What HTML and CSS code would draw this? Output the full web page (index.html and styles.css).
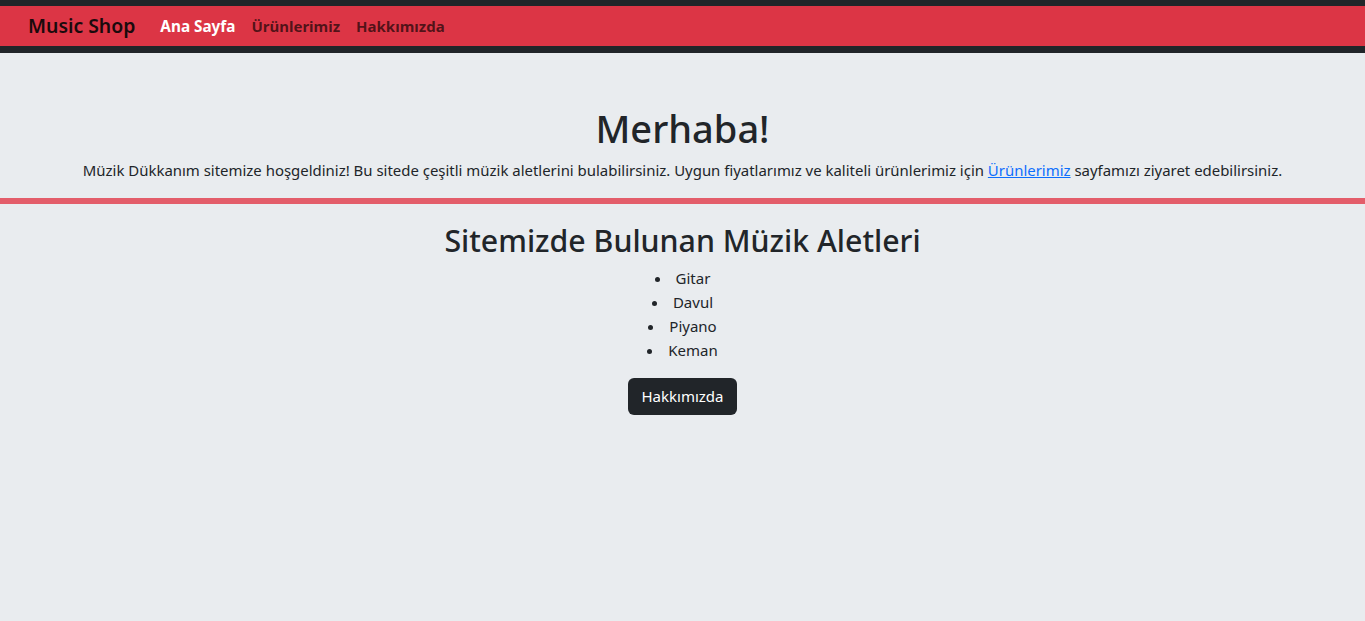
FILE: index.html
```html
<!DOCTYPE html>
<html lang="tr">
<head>
<meta charset="utf-8">
<title>Music Shop</title>
<link rel="stylesheet" href="styles.css">
</head>
<body>
<nav class="navbar">
  <a class="brand" href="#">Music Shop</a>
  <ul class="nav-links">
    <li><a class="nav-link active" href="#">Ana Sayfa</a></li>
    <li><a class="nav-link" href="#">Ürünlerimiz</a></li>
    <li><a class="nav-link" href="#">Hakkımızda</a></li>
  </ul>
</nav>
<header class="hero">
  <h1 class="hero-title">Merhaba!</h1>
  <p class="hero-text">Müzik Dükkanım sitemize hoşgeldiniz! Bu sitede çeşitli müzik aletlerini bulabilirsiniz. Uygun fiyatlarımız ve kaliteli ürünlerimiz için <a class="link" href="#">Ürünlerimiz</a> sayfamızı ziyaret edebilirsiniz.</p>
</header>
<main class="content">
  <h2 class="section-title">Sitemizde Bulunan Müzik Aletleri</h2>
  <ul class="instruments">
    <li>Gitar</li>
    <li>Davul</li>
    <li>Piyano</li>
    <li>Keman</li>
  </ul>
  <a class="btn-dark" href="#">Hakkımızda</a>
</main>
</body>
</html>
```
FILE: styles.css
```css
* { box-sizing: border-box; }
html, body { margin: 0; padding: 0; }
body {
  background: #e9ecef;
  color: #212529;
  font-family: "Noto Sans", "Open Sans", sans-serif;
  font-size: 15px;
  line-height: 24px;
}
.navbar {
  display: flex;
  align-items: center;
  background: #dc3545;
  border-top: 6px solid #212529;
  border-bottom: 7px solid #212529;
  height: 53px;
  padding: 0 28px;
}
.brand {
  color: #1a0a0c;
  text-decoration: none;
  font-size: 19.4px;
  font-weight: 600;
  margin-right: 25px;
}
.nav-links {
  display: flex;
  list-style: none;
  margin: 0;
  padding: 0;
  gap: 16px;
}
.nav-link {
  text-decoration: none;
  font-weight: 700;
  font-size: 15px;
  color: rgba(0, 0, 0, 0.65);
}
.nav-link.active {
  color: #fff;
  font-size: 15.3px;
}
.hero {
  text-align: center;
  padding-top: 51px;
  border-bottom: 6px solid #e35d6a;
}
.hero-title {
  margin: 0 0 6px;
  font-size: 38px;
  line-height: 48px;
  font-weight: 500;
}
.hero-text {
  margin: 0 0 16px;
  font-size: 14.94px;
}
.link { color: #0d6efd; }
.content {
  text-align: center;
  padding-top: 18px;
}
.section-title {
  margin: 0 0 6px;
  font-size: 30.3px;
  line-height: 38px;
  font-weight: 500;
}
.instruments {
  list-style-position: inside;
  margin: 0 0 16px;
  padding: 0;
}
.btn-dark {
  display: inline-block;
  background: #212529;
  color: #fff;
  text-decoration: none;
  padding: 6px 13px;
  border-radius: 6px;
  line-height: 25px;
}
```
